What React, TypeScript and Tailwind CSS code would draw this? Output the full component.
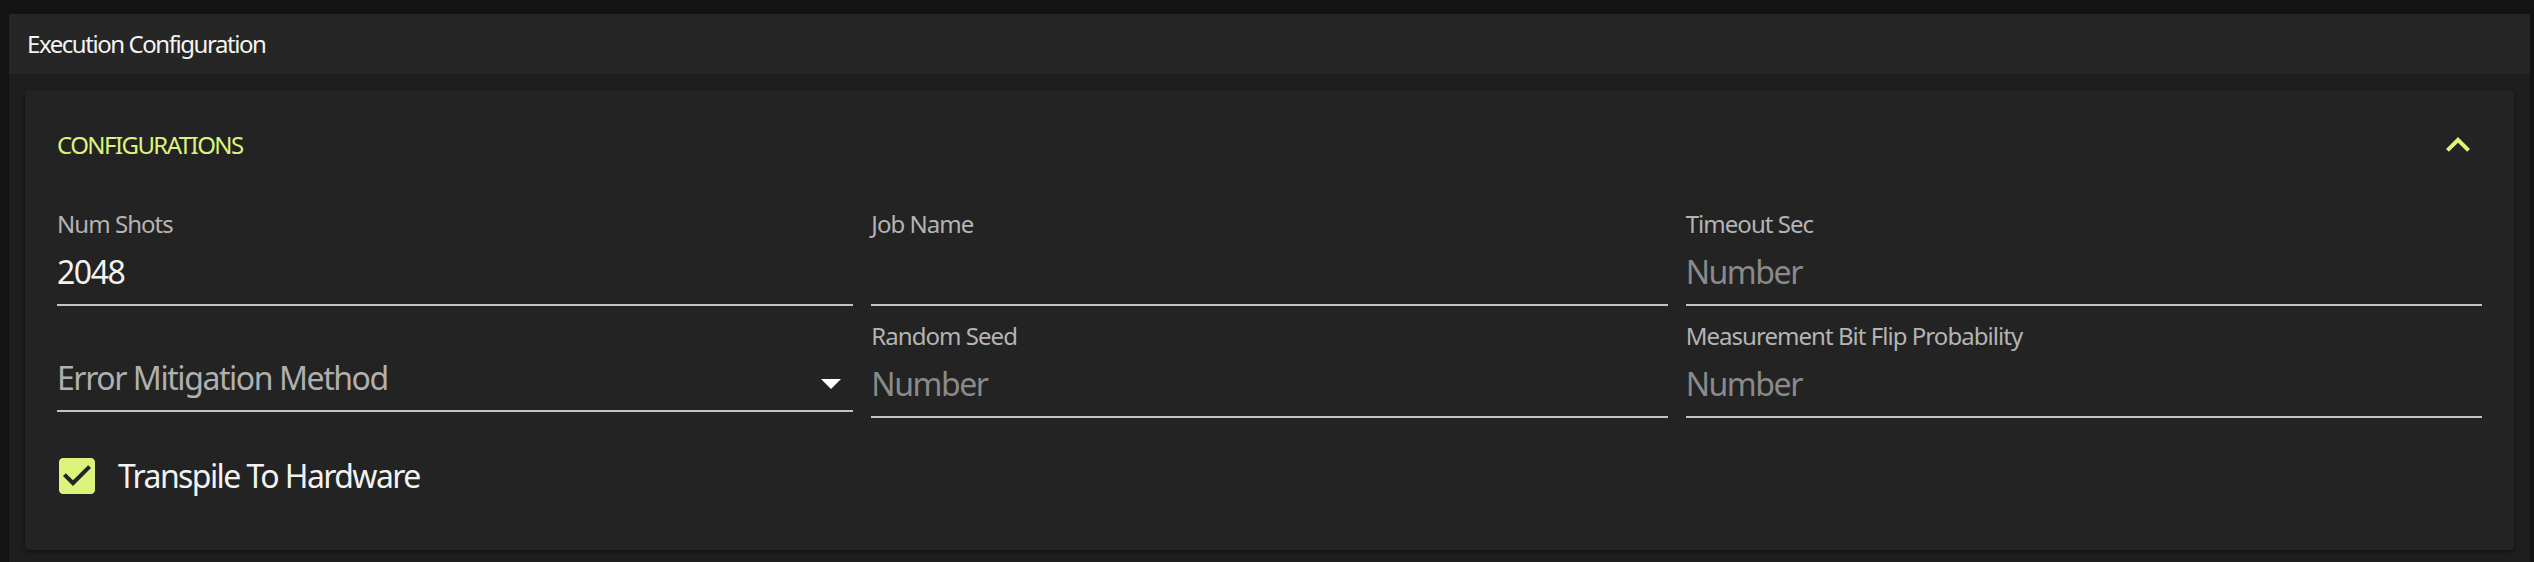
import React from "react";

const FONT = { fontFamily: '"Noto Sans", "Open Sans", sans-serif' };

function Field({ label, value, placeholder }: { label: string; value?: string; placeholder?: string }) {
  return (
    <div className="flex flex-col">
      <div className="h-[24px] text-[24px] leading-[24px] tracking-[-0.04em] text-[#b4b4b4] whitespace-nowrap">{label}</div>
      <div className="mt-[20px] border-b-2 border-[#c3c3c3] pb-[16px]">
        {value ? (
          <div className="h-[32px] text-[32px] leading-[32px] tracking-[-0.045em] text-[#f2f2f2]">{value}</div>
        ) : placeholder ? (
          <div className="h-[32px] text-[32px] leading-[32px] tracking-[-0.045em] text-[#8a8a8a]">{placeholder}</div>
        ) : (
          <div className="h-[32px]" />
        )}
      </div>
    </div>
  );
}

function SelectField({ label }: { label: string }) {
  return (
    <div className="mt-[38px] flex items-start border-b-2 border-[#c3c3c3] pb-[16px]">
      <div className="h-[32px] flex-1 text-[32px] leading-[32px] tracking-[-0.045em] text-[#b0b0b0] whitespace-nowrap">{label}</div>
      <svg width="20" height="10" viewBox="0 0 20 10" className="mr-[12px] mt-[17px]">
        <polygon points="0,0 20,0 10,10" fill="#ffffff" />
      </svg>
    </div>
  );
}

export default function App() {
  return (
    <div className="flex h-[562px] flex-col overflow-hidden bg-[#131313] pl-[9px] pr-[4px] pt-[14px]" style={FONT}>
      <div className="flex h-[60px] shrink-0 items-center bg-[#262626] pl-[18px]">
        <span className="text-[24px] tracking-[-0.06em] text-[#f4f4f4]">Execution Configuration</span>
      </div>
      <div className="flex-1 bg-[#1e1e1e] p-[16px]">
        <div className="rounded-[4px] bg-[#232323] px-[32px] pb-[50px] shadow-[0_2px_4px_rgba(0,0,0,0.45)]">
          <div className="flex h-[110px] items-center justify-between">
            <span className="text-[24px] tracking-[-0.065em] text-[#dcf37c]">CONFIGURATIONS</span>
            <svg width="48" height="48" viewBox="0 0 24 24">
              <path d="M12 8l-6 6 1.41 1.41L12 10.83l4.59 4.58L18 14z" fill="#dcf37c" />
            </svg>
          </div>
          <div className="mt-[12px] grid grid-cols-3 items-start gap-x-[18px] gap-y-[18px]">
            <Field label="Num Shots" value="2048" />
            <Field label="Job Name" />
            <Field label="Timeout Sec" placeholder="Number" />
            <SelectField label="Error Mitigation Method" />
            <Field label="Random Seed" placeholder="Number" />
            <Field label="Measurement Bit Flip Probability" placeholder="Number" />
          </div>
          <div className="mt-[34px] flex items-center">
            <svg width="48" height="48" viewBox="0 0 24 24" className="ml-[-4px]">
              <path
                fillRule="evenodd"
                d="M19 3H5c-1.11 0-2 .9-2 2v14c0 1.1.89 2 2 2h14c1.11 0 2-.9 2-2V5c0-1.1-.89-2-2-2zm-9 14l-5-5 1.41-1.41L10 14.17l7.59-7.59L19 8l-9 9z"
                fill="#dcf37c"
              />
            </svg>
            <span className="ml-[17px] text-[32px] leading-[32px] tracking-[-0.05em] text-[#f2f2f2]">Transpile To Hardware</span>
          </div>
        </div>
      </div>
    </div>
  );
}
